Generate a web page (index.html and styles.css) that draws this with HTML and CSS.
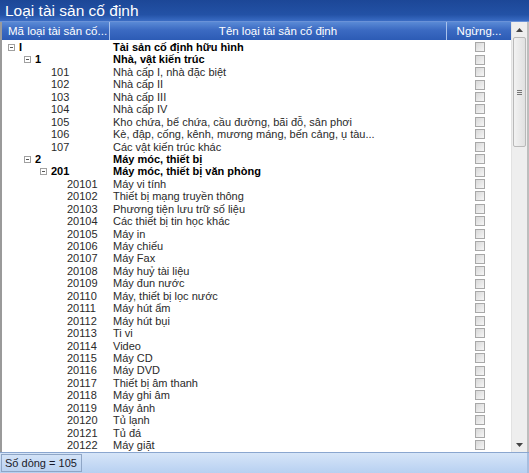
FILE: index.html
```html
<!DOCTYPE html>
<html>
<head>
<meta charset="utf-8">
<link rel="stylesheet" href="styles.css">
</head>
<body>
<div class="window">
  <div class="title">Loại tài sản cố định</div>
  <div class="main">
    <div class="grid">
      <div class="head">
        <div class="hc c1">Mã loại tài sản cố...</div>
        <div class="hc c2">Tên loại tài sản cố định</div>
        <div class="hc c3">Ngừng...</div>
      </div>
      <div class="rows" id="rows"></div>
    </div>
    <div class="vscroll">
      <div class="sbtn up"><svg width="7" height="4" viewBox="0 0 7 4"><path d="M0 4 L3.5 0 L7 4Z" fill="#444"/></svg></div>
      <div class="track">
        <div class="thumb"><span class="grip"></span></div>
      </div>
      <div class="sbtn down"><svg width="7" height="4" viewBox="0 0 7 4"><path d="M0 0 L3.5 4 L7 0Z" fill="#444"/></svg></div>
    </div>
  </div>
  <div class="status"><div class="count">Số dòng = 105</div><div class="rest"></div></div>
</div>
<script>
var data = [
 ["I","Tài sản cố định hữu hình",0,1],
 ["1","Nhà, vật kiến trúc",1,1],
 ["101","Nhà cấp I, nhà đặc biệt",2,0],
 ["102","Nhà cấp II",2,0],
 ["103","Nhà cấp III",2,0],
 ["104","Nhà cấp IV",2,0],
 ["105","Kho chứa, bể chứa, cầu đường, bãi đỗ, sân phơi",2,0],
 ["106","Kè, đập, cống, kênh, mương máng, bến cảng, ụ tàu...",2,0],
 ["107","Các vật kiến trúc khác",2,0],
 ["2","Máy móc, thiết bị",1,1],
 ["201","Máy móc, thiết bị văn phòng",2,1],
 ["20101","Máy vi tính",3,0],
 ["20102","Thiết bị mạng truyền thông",3,0],
 ["20103","Phương tiện lưu trữ số liệu",3,0],
 ["20104","Các thiết bị tin học khác",3,0],
 ["20105","Máy in",3,0],
 ["20106","Máy chiếu",3,0],
 ["20107","Máy Fax",3,0],
 ["20108","Máy huỷ tài liệu",3,0],
 ["20109","Máy đun nước",3,0],
 ["20110","Máy, thiết bị lọc nước",3,0],
 ["20111","Máy hút ẩm",3,0],
 ["20112","Máy hút bụi",3,0],
 ["20113","Ti vi",3,0],
 ["20114","Video",3,0],
 ["20115","Máy CD",3,0],
 ["20116","Máy DVD",3,0],
 ["20117","Thiết bị âm thanh",3,0],
 ["20118","Máy ghi âm",3,0],
 ["20119","Máy ảnh",3,0],
 ["20120","Tủ lạnh",3,0],
 ["20121","Tủ đá",3,0],
 ["20122","Máy giặt",3,0]
];
var html = "";
data.forEach(function(d){
  var cls = d[3] ? "row group" : "row";
  html += '<div class="' + cls + '">' +
    '<div class="c1 cell" style="padding-left:' + (6 + 16*d[2]) + 'px">' +
    (d[3] ? '<span class="exp"></span>' : '<span class="sp"></span>') +
    '<span class="code">' + d[0] + '</span></div>' +
    '<div class="c2 cell">' + d[1] + '</div>' +
    '<div class="c3 cell"><span class="chk"></span></div></div>';
});
document.getElementById("rows").innerHTML = html;
</script>
</body>
</html>
```
FILE: styles.css
```css
* { box-sizing: border-box; }
html, body { margin: 0; padding: 0; }
body {
  width: 529px; height: 473px; overflow: hidden;
  font-family: "Liberation Sans", Arial, sans-serif;
  font-size: 11px; color: #2a2a2a; background: #fff;
}
.window { display: flex; flex-direction: column; height: 473px; }
.title {
  height: 22px; flex: none;
  background: linear-gradient(#1c4797 0%, #2352a6 70%, #3a6cc4 100%);
  color: #fff; font-size: 15.5px; padding: 1px 0 0 5px; line-height: 19px;
  border-bottom: 1px solid #6a92d8;
}
.main { flex: 1; display: flex; min-height: 0; border-left: 2px solid #9a9a9a; }
.grid { flex: none; width: 509px; display: flex; flex-direction: column; }
.head {
  display: grid; grid-template-columns: 108px 337px 64px; height: 18px; flex: none;
  background: linear-gradient(#5a8ad6 0%, #3b6ac2 45%, #2c5bb5 100%);
  color: #fff; font-size: 11.5px;
}
.hc { line-height: 18px; text-align: center; white-space: nowrap; overflow: hidden;
  border-right: 1px solid #a9c2ec; }
.hc.c1 { text-align: left; padding-left: 6px; }
.hc.c3 { border-right: none; }
.rows { flex: 1; padding-top: 1px; }
.row { display: grid; grid-template-columns: 108px 337px 64px; height: 12.44px; }
.cell { line-height: 12.44px; white-space: nowrap; overflow: hidden; }
.c1.cell { display: flex; align-items: center; }
.c2.cell { padding-left: 3px; }
.group .cell { font-weight: bold; color: #000; }
.exp {
  width: 7px; height: 7px; border: 1px solid #a0a0a0; margin-right: 4px; flex: none;
  position: relative; background: #fff;
}
.exp::after { content: ""; position: absolute; left: 1px; top: 2px; width: 3px; height: 1px; background: #555; }
.sp { width: 11px; flex: none; }
.c3.cell { display: flex; justify-content: center; align-items: center; padding-left: 1px; }
.chk {
  width: 10px; height: 10px; border: 1px solid #a8a8a8;
  background: linear-gradient(135deg, #d8d8d8, #f6f6f6);
}
.vscroll {
  flex: none; width: 18px; display: flex; flex-direction: column;
  background: #eeeeee; border-left: 1px solid #e2e2e2; border-right: 2px solid #bdbdbd;
}
.sbtn { height: 15px; display: flex; align-items: center; justify-content: center; flex: none; }
.track { flex: 1; padding: 0 1px; }
.thumb {
  height: 110px; border: 1px solid #b9b9b9; border-radius: 2px;
  background: linear-gradient(90deg, #f2f2f2, #e1e1e1);
  display: flex; align-items: center; justify-content: center;
}
.grip { width: 5px; height: 5px; border-top: 1px solid #777; border-bottom: 1px solid #777; position: relative; }
.grip::after { content: ""; position: absolute; left: 0; top: 1px; width: 5px; height: 1px; background: #777; }
.status {
  height: 21px; flex: none; display: flex;
  background: linear-gradient(#d6e5f8, #b7d0f1);
  border-top: 1px solid #8aa6cf;
}
.count {
  flex: none; white-space: nowrap; border: 1px solid #8fa6c6;
  line-height: 17px; padding: 0 4px 0 3px; color: #1a1a2a; margin: 1px 0 1px 1px;
}
.rest { flex: 1; border-right: 2px solid #a7bedf; }
```
